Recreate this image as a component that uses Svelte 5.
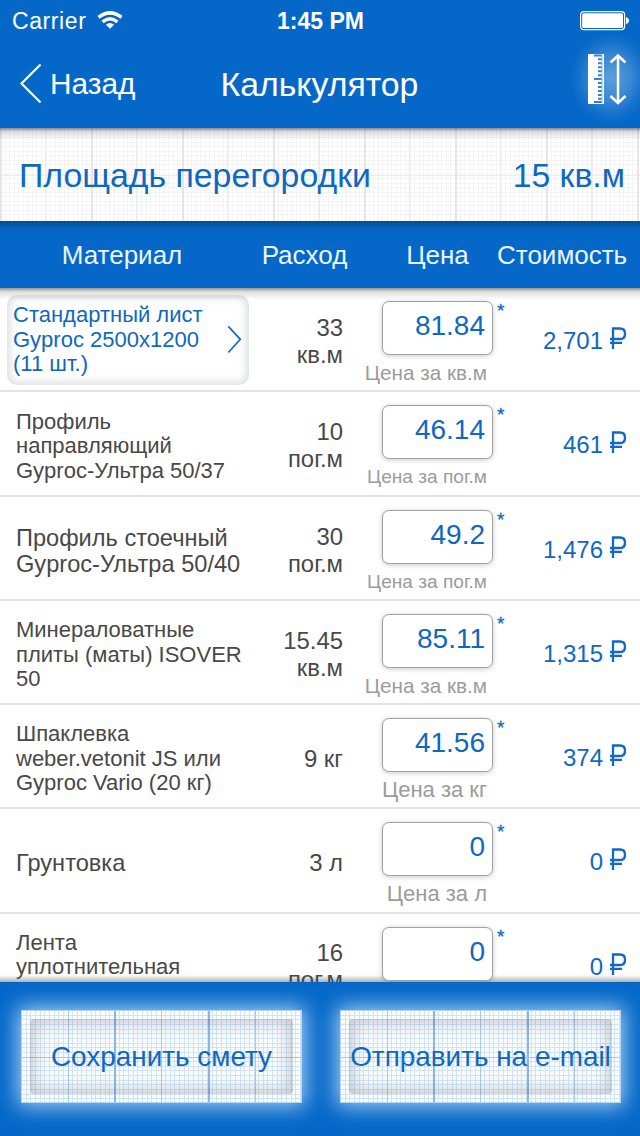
<script>
	let area = $state('15 кв.м');

	let items = $state([
		{ name: ['Стандартный лист', 'Gyproc 2500x1200', '(11 шт.)'], amount: ['33', 'кв.м'], price: '81.84', unit: 'кв.м', fit: 'medium', cost: '2,701', selectable: true },
		{ name: ['Профиль', 'направляющий', 'Gyproc-Ультра 50/37'], amount: ['10', 'пог.м'], price: '46.14', unit: 'пог.м', fit: 'small', cost: '461' },
		{ name: ['Профиль стоечный', 'Gyproc-Ультра 50/40'], amount: ['30', 'пог.м'], price: '49.2', unit: 'пог.м', fit: 'small', cost: '1,476' },
		{ name: ['Минераловатные', 'плиты (маты) ISOVER', '50'], amount: ['15.45', 'кв.м'], price: '85.11', unit: 'кв.м', fit: 'medium', cost: '1,315' },
		{ name: ['Шпаклевка', 'weber.vetonit JS или', 'Gyproc Vario (20 кг)'], amount: ['9 кг'], price: '41.56', unit: 'кг', fit: 'large', cost: '374' },
		{ name: ['Грунтовка'], amount: ['3 л'], price: '0', unit: 'л', fit: 'large', cost: '0' },
		{ name: ['Лента', 'уплотнительная', ''], amount: ['16', 'пог.м'], price: '0', unit: '', fit: 'small', cost: '0' }
	]);
</script>

<div class="screen">
	<header>
		<div class="status">
			<div class="carrier">
				<span>Carrier</span>
				<svg width="26" height="18" viewBox="0 0 26 18">
					<g fill="none" stroke="#fff" stroke-width="3.5">
						<path d="M1.5 6.4Q13 -2.6 24.5 6.4" />
						<path d="M5.6 10.8Q13 4.6 20.4 10.8" />
					</g>
					<path d="M8.9 13.8Q13 10.4 17.1 13.8L13 17.8Z" fill="#fff" />
				</svg>
			</div>
			<b>1:45 PM</b>
			<svg class="battery" width="50" height="20" viewBox="0 0 50 20">
				<rect x="0.6" y="0.6" width="44" height="18" rx="3" fill="none" stroke="#fff" stroke-width="1.2" />
				<rect x="2.2" y="2.2" width="40.8" height="14.8" rx="1.5" fill="#fff" />
				<path d="M46 6.2Q49 6.8 49 9.6Q49 12.4 46 13Z" fill="#fff" />
			</svg>
		</div>
		<div class="nav">
			<button class="back">
				<svg width="22" height="42" viewBox="0 0 22 42">
					<path d="M20.5 1.5L1.5 20.5L20.5 39.5" fill="none" stroke="#fff" stroke-width="2.2" />
				</svg>
				<span>Назад</span>
			</button>
			<h1>Калькулятор</h1>
			<button class="measure" aria-label="Размеры">
				<svg width="40" height="52" viewBox="0 0 40 52">
					<rect x="1" y="1" width="16" height="50" fill="#fff" />
					<path
						d="M7 2.5H15M11 6.3H15M11 10.3H15M11 14.3H15M11 18.3H15M11 22.3H15M7 26H15M11 30H15M11 34H15M11 38H15M11 42H15M11 45.7H15M7 49H15"
						stroke="#3b7fc6"
						stroke-width="1.9"
					/>
					<path d="M15 2V50" stroke="#8db6df" stroke-width="1" />
					<path d="M31 3V49M23.5 9.5L31 2.5L38.5 9.5M23.5 43L31 50L38.5 43" fill="none" stroke="#fff" stroke-width="2.5" />
				</svg>
			</button>
		</div>
	</header>

	<section class="area">
		<span>Площадь перегородки</span>
		<span>{area}</span>
	</section>

	<div class="columns">
		<span>Материал</span>
		<span>Расход</span>
		<span>Цена</span>
		<span>Стоимость</span>
	</div>

	<main>
		{#each items as item}
			<div class="row">
				<div class="name lines-{item.name.length}" class:selectable={item.selectable}>
					<div>
						{#each item.name as line}
							<div class="line">{line}</div>
						{/each}
					</div>
					{#if item.selectable}
						<svg width="15" height="29" viewBox="0 0 15 29">
							<path d="M1.3 1.3L13.3 14.3L1.3 27.5" fill="none" stroke="#1169c2" stroke-width="1.7" />
						</svg>
					{/if}
				</div>
				<div class="amount">
					{#each item.amount as line}
						<div>{line}</div>
					{/each}
				</div>
				<div class="price">
					<div class="field">{item.price}</div>
					{#if item.unit}
						<div class="unit {item.fit}">Цена за {item.unit}</div>
					{/if}
				</div>
				<span class="star">*</span>
				<div class="cost">
					<span>{item.cost}</span>
					<svg width="18" height="23" viewBox="0 0 18 23">
						<path d="M4 22V1.5H11Q16 1.5 16 6.7Q16 12 11 12H1M1 15.8H13" fill="none" stroke="#1169c2" stroke-width="2.3" />
					</svg>
				</div>
			</div>
		{/each}
	</main>

	<footer>
		<button class="action"><span>Сохранить смету</span></button>
		<button class="action"><span>Отправить на e-mail</span></button>
	</footer>
</div>

<style>
	:global(body) {
		margin: 0;
		background: #0568c8;
	}

	.screen {
		display: flex;
		flex-direction: column;
		width: 640px;
		height: 1136px;
		overflow: hidden;
		background: #fff;
		color: #0f68c0;
		font-family: 'Liberation Sans', Arial, sans-serif;
	}

	.screen * {
		box-sizing: border-box;
	}

	svg {
		display: block;
		flex: none;
	}

	button {
		padding: 0;
		border: 0;
		background: none;
		color: inherit;
		font: inherit;
		white-space: nowrap;
	}

	header {
		flex: none;
		height: 128px;
		background: #0568c8;
		color: #fff;
	}

	.status {
		display: grid;
		grid-template-columns: 1fr auto 1fr;
		align-items: center;
		height: 40px;
		padding: 2px 11px 0 12px;
		font-size: 23px;
	}

	.carrier {
		display: flex;
		align-items: center;
		gap: 11px;
		letter-spacing: 0.6px;
	}

	.carrier svg {
		margin-top: -3px;
	}

	.battery {
		justify-self: end;
		margin-right: -1px;
	}

	.nav {
		display: grid;
		grid-template-columns: 1fr auto 1fr;
		align-items: center;
		height: 88px;
		padding: 0 0 0 20px;
	}

	.back {
		display: flex;
		align-items: center;
		gap: 8px;
		margin-top: -1px;
		font-size: 29.8px;
	}

	h1 {
		margin: 0 21px 0 0;
		font-size: 33.8px;
		font-weight: 400;
	}

	.measure {
		justify-self: end;
		margin-top: -11px;
		padding: 22px 13px 22px 26px;
		background: radial-gradient(ellipse 41px 46px at 50px 47px, rgba(255, 255, 255, 0.36), rgba(255, 255, 255, 0.2) 50%, rgba(255, 255, 255, 0.06) 80%, transparent);
	}

	.area {
		display: flex;
		flex: none;
		align-items: center;
		justify-content: space-between;
		height: 93px;
		padding: 1px 15px 0 19px;
		background:
			linear-gradient(rgba(70, 80, 90, 0.65), rgba(110, 110, 110, 0.2) 4px, transparent 12px),
			repeating-linear-gradient(90deg, #e6e6e6 0 2px, transparent 2px 91px),
			repeating-linear-gradient(90deg, #ececec 0 1px, transparent 1px 45.5px),
			linear-gradient(#eee, #eee) 0 47px / 100% 1px no-repeat,
			repeating-linear-gradient(90deg, #f4f4f4 0 1px, transparent 1px 4.55px),
			repeating-linear-gradient(#f4f4f4 0 1px, transparent 1px 4.55px),
			#fff;
		font-size: 33.8px;
	}

	.columns {
		display: grid;
		flex: none;
		grid-template-columns: 244px 121px 132px 1fr;
		align-items: center;
		height: 67px;
		padding-top: 1px;
		background: linear-gradient(#034d95, #0562bc 7px, #0568c8 16px);
		color: #eaf6ff;
		font-size: 26px;
		text-align: center;
	}

	.columns span:nth-child(3) {
		padding-left: 13px;
	}

	.columns span:last-child {
		text-align: left;
	}

	main {
		flex: 1;
		min-height: 0;
		overflow: hidden;
		background:
			linear-gradient(rgba(60, 60, 60, 0.55), rgba(100, 100, 100, 0.2) 4px, transparent 12px) top / 100% 12px no-repeat,
			linear-gradient(transparent, rgba(80, 80, 80, 0.45)) bottom / 100% 7px no-repeat,
			#fff;
	}

	.row {
		display: grid;
		grid-template-columns: 250px 93px 150px 15px 119px;
		height: 104.3px;
		border-bottom: 2px solid #e3e3e5;
	}

	.name {
		display: flex;
		align-items: center;
		padding: 5px 0 0 16px;
		color: #484848;
		font-size: 22px;
		line-height: 24.5px;
		white-space: nowrap;
	}

	.line {
		min-height: 24.5px;
	}

	.lines-1,
	.lines-2 {
		font-size: 23.6px;
		line-height: 26px;
	}

	.selectable {
		justify-content: space-between;
		height: 90px;
		margin: 7px 1px 0 7px;
		padding: 0 7px 0 6px;
		border-radius: 10px;
		box-shadow: inset 0 0 10px 2px rgba(50, 60, 70, 0.2);
		color: #0f68c0;
	}

	.selectable svg {
		margin-top: -2px;
	}

	.amount {
		align-self: center;
		padding-top: 3px;
		color: #484848;
		font-size: 23.9px;
		line-height: 27px;
		text-align: right;
	}

	.price {
		display: flex;
		flex-direction: column;
		align-items: flex-end;
		padding-top: 13px;
	}

	.field {
		width: 111px;
		height: 54px;
		padding: 0 7px;
		border: 1px solid #a2a2a2;
		border-radius: 7px;
		background: #fff;
		box-shadow: 0 1px 5px rgba(0, 0, 0, 0.22);
		font-size: 28px;
		line-height: 48px;
		text-align: right;
	}

	.unit {
		padding-right: 6px;
		color: #9b9b9b;
		line-height: 36px;
		white-space: nowrap;
	}

	.small {
		font-size: 19.1px;
	}

	.medium {
		font-size: 20.7px;
	}

	.large {
		font-size: 22px;
	}

	.star {
		padding: 12px 0 0 4px;
		font-size: 19px;
		-webkit-text-stroke: 0.3px;
	}

	.cost {
		display: flex;
		align-items: flex-start;
		justify-content: flex-end;
		gap: 6px;
		padding-top: 39px;
		font-size: 24px;
		line-height: 28px;
	}

	footer {
		display: flex;
		flex: none;
		align-items: flex-start;
		justify-content: space-between;
		height: 154px;
		padding: 28px 19px 0 21px;
		background: #0568c8;
	}

	.action {
		width: 281px;
		height: 93px;
		padding: 8px;
		border: 1px solid #b5d4f1;
		background:
			linear-gradient(#a5c8eb, #a5c8eb) 0 46px / 100% 1px no-repeat,
			repeating-linear-gradient(90deg, transparent 0 92px, #8ab6e4 92px 94px),
			repeating-linear-gradient(90deg, transparent 0 45.8px, #a5c8eb 45.8px 46.8px),
			repeating-linear-gradient(90deg, transparent 0 3.65px, #d2e4f4 3.65px 4.65px),
			repeating-linear-gradient(transparent 0 3.65px, #d2e4f4 3.65px 4.65px),
			#f8fcff;
		box-shadow: 0 0 20px 3px rgba(200, 230, 255, 0.85);
		font-size: 27.9px;
	}

	.action span {
		display: flex;
		align-items: center;
		justify-content: center;
		height: 100%;
		border-radius: 4px;
		box-shadow: inset 0 0 15px 3px rgba(50, 60, 75, 0.28);
	}
</style>
